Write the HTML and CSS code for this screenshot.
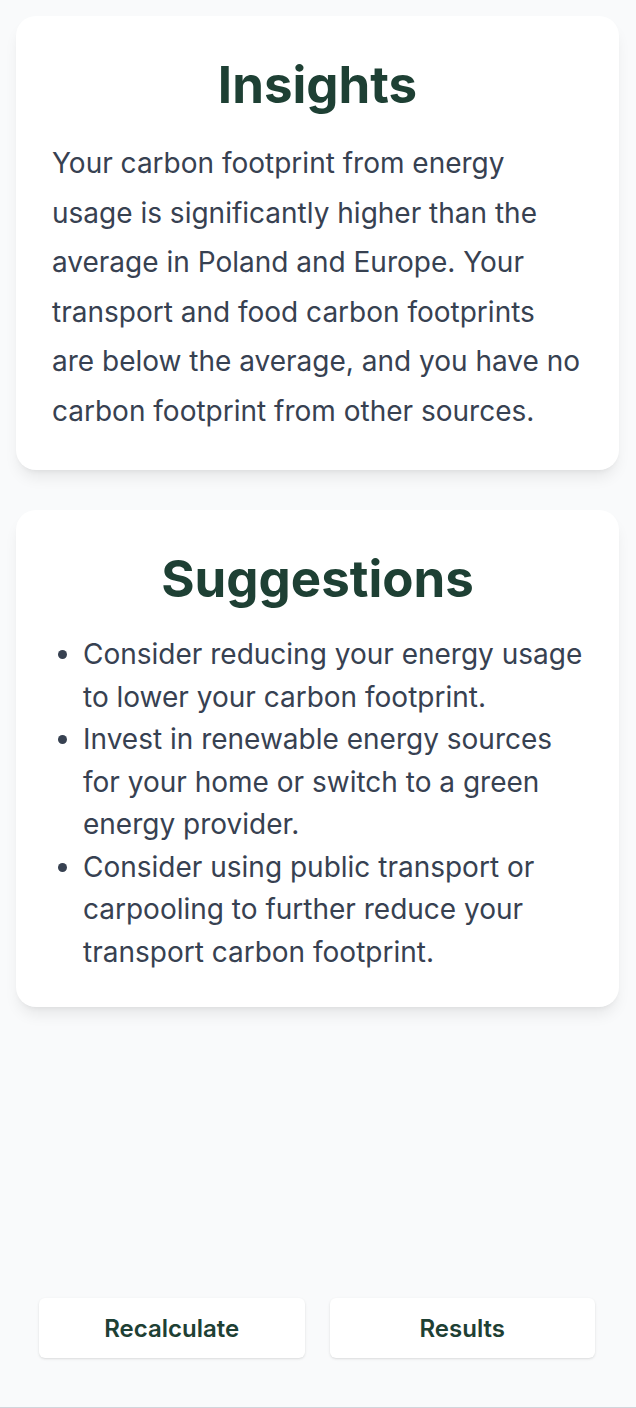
FILE: index.html
```html
<!DOCTYPE html>
<html lang="en">
<head>
<meta charset="utf-8">
<title>Insights</title>
<link rel="stylesheet" href="styles.css">
</head>
<body>
<div class="page">
  <main class="content">
    <section class="card">
      <h1 class="card-title">Insights</h1>
      <p class="insight-text">Your carbon footprint from energy usage is significantly higher than the average in Poland and Europe. Your transport and food carbon footprints are below the average, and you have no carbon footprint from other sources.</p>
    </section>
    <section class="card card-suggestions">
      <h1 class="card-title">Suggestions</h1>
      <ul class="suggestion-list">
        <li>Consider reducing your energy usage to lower your carbon footprint.</li>
        <li>Invest in renewable energy sources for your home or switch to a green energy provider.</li>
        <li>Consider using public transport or carpooling to further reduce your transport carbon footprint.</li>
      </ul>
    </section>
  </main>
  <div class="actions">
    <button class="btn" type="button">Recalculate</button>
    <button class="btn" type="button">Results</button>
  </div>
  <div class="footer-line"></div>
</div>
</body>
</html>
```
FILE: styles.css
```css
* { box-sizing: border-box; }
html, body { margin: 0; padding: 0; }
body {
  background: #f9fafb;
  font-family: Inter, "Noto Sans", "Liberation Sans", sans-serif;
  color: #374151;
}
.page {
  min-height: 1408px;
  display: flex;
  flex-direction: column;
}
.content {
  flex: 1;
  padding: 16px 17px 0 16px;
  display: flex;
  flex-direction: column;
  gap: 40px;
}
.card {
  background: #ffffff;
  border-radius: 20px;
  box-shadow: 0 10px 15px -3px rgba(0,0,0,0.08), 0 4px 6px -4px rgba(0,0,0,0.08);
  padding: 43px 36px 34px 36px;
}
.card-title {
  margin: 0;
  text-align: center;
  font-size: 51px;
  line-height: 1;
  font-weight: 700;
  color: #1e4034;
}
.insight-text {
  margin: 29px 0 0 0;
  font-size: 28px;
  line-height: 49.5px;
}
.suggestion-list {
  margin: 29px 0 0 0;
  padding-left: 31px;
  font-size: 28px;
  line-height: 42.5px;
}
.actions {
  display: flex;
  gap: 25px;
  padding: 0 41px 49px 39px;
}
.btn {
  flex: 1;
  height: 60px;
  background: #ffffff;
  border: none;
  border-radius: 6px;
  box-shadow: 0 1px 3px rgba(0,0,0,0.1), 0 1px 2px -1px rgba(0,0,0,0.1);
  font-family: Inter, "Noto Sans", "Liberation Sans", sans-serif;
  font-size: 24px;
  font-weight: 600;
  color: #1e4034;
}
.footer-line {
  height: 1px;
  background: #d1d5db;
}
```
